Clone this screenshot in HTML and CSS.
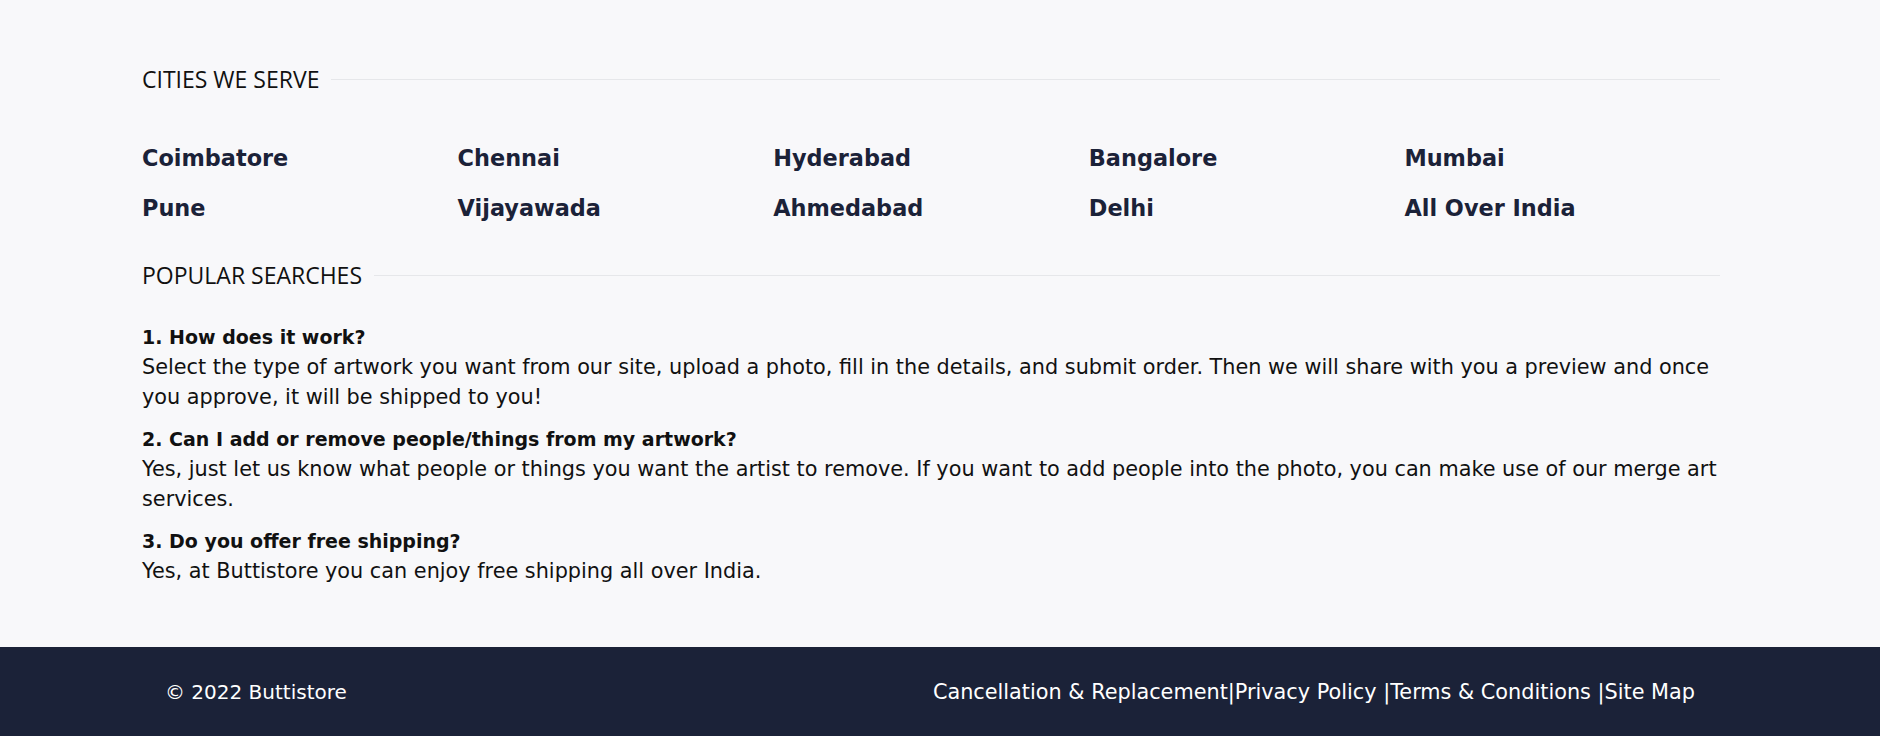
FILE: index.html
```html
<!DOCTYPE html>
<html lang="en">
<head>
<meta charset="utf-8">
<title>Buttistore</title>
<link rel="stylesheet" href="styles.css">
</head>
<body>
<main class="main">
  <section class="block">
    <h2 class="section-title"><span>CITIES WE SERVE</span></h2>
    <ul class="cities">
      <li>Coimbatore</li>
      <li>Chennai</li>
      <li>Hyderabad</li>
      <li>Bangalore</li>
      <li>Mumbai</li>
      <li>Pune</li>
      <li>Vijayawada</li>
      <li>Ahmedabad</li>
      <li>Delhi</li>
      <li>All Over India</li>
    </ul>
  </section>
  <section class="block searches">
    <h2 class="section-title"><span>POPULAR SEARCHES</span></h2>
    <div class="faq">
      <div class="faq-item">
        <h3 class="q">1. How does it work?</h3>
        <p class="a">Select the type of artwork you want from our site, upload a photo, fill in the details, and submit order. Then we will share with you a preview and once you approve, it will be shipped to you!</p>
      </div>
      <div class="faq-item">
        <h3 class="q">2. Can I add or remove people/things from my artwork?</h3>
        <p class="a">Yes, just let us know what people or things you want the artist to remove. If you want to add people into the photo, you can make use of our merge art services.</p>
      </div>
      <div class="faq-item">
        <h3 class="q">3. Do you offer free shipping?</h3>
        <p class="a">Yes, at Buttistore you can enjoy free shipping all over India.</p>
      </div>
    </div>
  </section>
</main>
<footer class="footer">
  <div class="copy">© 2022 Buttistore</div>
  <nav class="links"><a href="#">Cancellation &amp; Replacement</a>|<a href="#">Privacy Policy </a>|<a href="#">Terms &amp; Conditions </a>|<a href="#">Site Map</a></nav>
</footer>
</body>
</html>
```
FILE: styles.css
```css
* { box-sizing: border-box; }
html, body { margin: 0; padding: 0; }
body {
  background: #f8f8fa;
  font-family: "DejaVu Sans", "Noto Sans", sans-serif;
  color: #111;
}
.main {
  padding: 64px 160px 61px 142px;
}
.section-title {
  display: flex;
  align-items: center;
  gap: 12px;
  margin: 0;
  font-family: "Open Sans", "Noto Sans", sans-serif;
  font-weight: 400;
  font-size: 23px;
  line-height: 30px;
  color: #111;
}
.section-title::after {
  content: "";
  flex: 1;
  height: 1px;
  background: #e6e7ea;
}
.cities {
  list-style: none;
  margin: 39px 0 0 0;
  padding: 0;
  display: grid;
  grid-template-columns: repeat(5, 1fr);
}
.cities li {
  font-size: 22.4px;
  font-weight: 700;
  line-height: 50px;
  color: #1b2238;
}
.searches { margin-top: 27px; }
.faq { margin-top: 32px; display: flex; flex-direction: column; gap: 12px; }
.q {
  margin: 0;
  font-size: 19px;
  font-weight: 700;
  line-height: 30px;
  color: #111;
}
.a {
  margin: 0;
  font-size: 20.8px;
  font-weight: 400;
  line-height: 30px;
  color: #111;
}
.footer {
  background: #1b2238;
  height: 90px;
  display: flex;
  align-items: center;
  justify-content: space-between;
  padding: 0 185px 0 165px;
  color: #fff;
  font-size: 20px;
}
.links { font-size: 20.8px; }
.links a { color: #fff; text-decoration: none; }
```
